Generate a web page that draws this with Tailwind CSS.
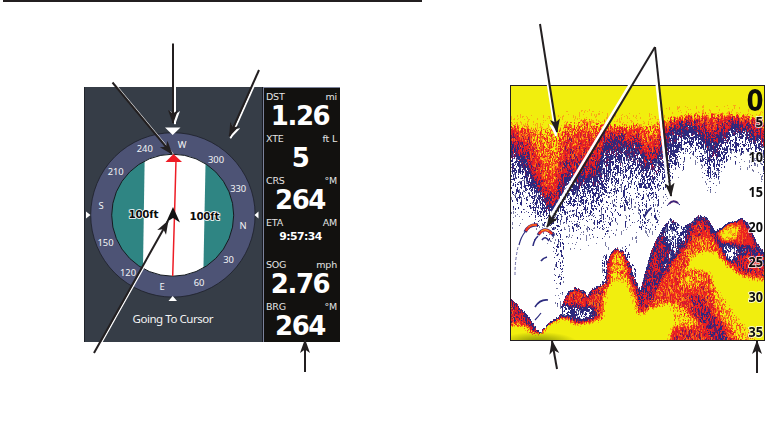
<!DOCTYPE html>
<html lang="en">
<head>
    <meta charset="UTF-8">
    <meta name="viewport" content="width=device-width, initial-scale=1.0">
    <title>Navigation and Sonar Displays</title>
    <script src="https://cdn.jsdelivr.net/npm/@tailwindcss/browser@4"></script>
</head>
<body class="bg-white overflow-hidden font-['DejaVu_Sans',sans-serif]">
    <div class="relative w-[765px] h-[437px] overflow-hidden">
        <div class="ml-[3px] w-[419px] h-[2px] bg-[#231f20]"></div>

        <div class="flex items-start pl-[84px] pt-[83px]">
            <!-- Compass page -->
            <div class="flex mt-[2px] w-[256px] h-[255px] bg-[#12110f]">
                <svg class="w-[178px] h-[255px] bg-[#363d47]" viewBox="84 87 178 255">
                    <defs>
                        <clipPath id="dial"><circle cx="172.7" cy="215.2" r="61"/></clipPath>
                    </defs>
                    <path d="M84.5 87V342" stroke="#20242b"/>
                    <circle cx="172.9" cy="214.9" r="82.2" fill="#4d5375" stroke="#1d2029" stroke-width=".8"/>
                    <g clip-path="url(#dial)">
                        <rect x="110" y="150" width="126" height="130" fill="#2f8583"/>
                        <path d="M144.8 150H205.8L203.2 280H142.8Z" fill="#fff"/>
                    </g>
                    <circle cx="172.7" cy="215.2" r="61" fill="none" stroke="#171a20" stroke-width="1"/>
                    <path d="M176 160L174.5 215L172.7 276" fill="none" stroke="#ee1c25" stroke-width="1.5"/>
                    <path d="M173.5 154L182 162H165.5Z" fill="#ee1c25"/>
                    <path d="M165 127.500H180.500L172.700 135ZM172.700 296L177 301H168.500ZM86 211.500V218.500L90.500 215ZM258.500 211.500V218.500L254.500 215Z" fill="#fff"/>
                    <path d="M173 207L180 222.500L173 218L166 222.500Z" fill="#111"/>
                    <g fill="#f2f3f6" font-size="9.400" text-anchor="middle" font-family="Noto Sans, sans-serif">
                        <text x="144.800" y="152.200">240</text>
                        <text x="182" y="148.200">W</text>
                        <text x="216" y="162.700">300</text>
                        <text x="238.200" y="191.700">330</text>
                        <text x="115.700" y="174.700">210</text>
                        <text x="101" y="209.200">S</text>
                        <text x="243" y="229.200">N</text>
                        <text x="105.500" y="246">150</text>
                        <text x="228.500" y="263.200">30</text>
                        <text x="128" y="275.500">120</text>
                        <text x="162" y="290.200">E</text>
                        <text x="199" y="286.200">60</text>
                    </g>
                    <g font-size="10.500" font-weight="bold" fill="#0b0b0b" stroke="#fff" stroke-width="1.600" paint-order="stroke" font-family="DejaVu Sans, sans-serif">
                        <text x="128.500" y="218.200" textLength="30">100ft</text>
                        <text x="189.500" y="220.200" textLength="30">100ft</text>
                    </g>
                    <text x="132.500" y="323" textLength="81" font-size="11.500" fill="#f4f4f4" font-family="Noto Sans, sans-serif">Going To Cursor</text>
                </svg>
                <!-- Data boxes -->
                <div class="flex flex-col w-[78px] border-l border-[#191b22] shadow-[inset_1px_1px_0_#7b829b] pl-[3px] pr-[3px] pt-[4px] text-white">
                    <div class="h-[42px]">
                        <div class="flex justify-between text-[9.5px] leading-[11px] tracking-[-0.2px] text-[#e4e4e4]"><span>DST</span><span>mi</span></div>
                        <div class="text-[26px] leading-[29px] tracking-[-1.4px] font-bold text-center pr-[3px]">1.26</div>
                    </div>
                    <div class="h-[42px]">
                        <div class="flex justify-between text-[9.5px] leading-[11px] tracking-[-0.2px] text-[#e4e4e4]"><span>XTE</span><span>ft L</span></div>
                        <div class="text-[26px] leading-[29px] tracking-[-1.4px] font-bold text-center pr-[3px]">5</div>
                    </div>
                    <div class="h-[42px]">
                        <div class="flex justify-between text-[9.5px] leading-[11px] tracking-[-0.2px] text-[#e4e4e4]"><span>CRS</span><span>°M</span></div>
                        <div class="text-[26px] leading-[29px] tracking-[-1.4px] font-bold text-center pr-[3px]">264</div>
                    </div>
                    <div class="h-[42px]">
                        <div class="flex justify-between text-[9.5px] leading-[11px] tracking-[-0.2px] text-[#e4e4e4]"><span>ETA</span><span>AM</span></div>
                        <div class="text-[10.8px] leading-[18px] tracking-[-0.5px] font-bold text-center pr-[2px]">9:57:34</div>
                    </div>
                    <div class="h-[42px]">
                        <div class="flex justify-between text-[9.5px] leading-[11px] tracking-[-0.2px] text-[#e4e4e4]"><span>SOG</span><span>mph</span></div>
                        <div class="text-[26px] leading-[29px] tracking-[-1.4px] font-bold text-center pr-[3px]">2.76</div>
                    </div>
                    <div class="h-[40px]">
                        <div class="flex justify-between text-[9.5px] leading-[11px] tracking-[-0.2px] text-[#e4e4e4]"><span>BRG</span><span>°M</span></div>
                        <div class="text-[26px] leading-[29px] tracking-[-1.4px] font-bold text-center pr-[3px]">264</div>
                    </div>
                </div>
            </div>

            <!-- Sonar page -->
            <canvas id="sonar" width="255" height="256" class="ml-[170px] block"></canvas>
        </div>

        <!-- Depth scale and callout arrows -->
        <svg class="absolute left-0 top-0 w-[765px] h-[437px]" viewBox="0 0 765 437">
            <defs>
                <marker id="head" markerUnits="userSpaceOnUse" markerWidth="16" markerHeight="12" refX="13" refY="5" orient="auto">
                    <path d="M0 0L14 5L0 10L3.500 5Z" fill="#231f20"/>
                </marker>
                <marker id="glow" markerUnits="userSpaceOnUse" markerWidth="16" markerHeight="12" refX="13" refY="5" orient="auto">
                    <path d="M0 0L14 5L0 10L3.500 5Z" fill="#fff"/>
                </marker>
            </defs>
            <g font-family="Noto Sans, sans-serif" font-weight="bold" font-size="14" fill="#0c0c0c" stroke="#fff" stroke-opacity=".75" stroke-width="2" paint-order="stroke">
                <text x="746.500" y="111" font-size="31" stroke="none" font-family="DejaVu Sans, sans-serif" textLength="17" lengthAdjust="spacingAndGlyphs">0</text>
                <text x="755.500" y="127" textLength="7.500" lengthAdjust="spacingAndGlyphs">5</text>
                <text x="748.500" y="162" textLength="14.500" lengthAdjust="spacingAndGlyphs">10</text>
                <text x="748.500" y="197" textLength="14.500" lengthAdjust="spacingAndGlyphs">15</text>
                <text x="748.500" y="232" textLength="14.500" lengthAdjust="spacingAndGlyphs">20</text>
                <text x="748.500" y="267" textLength="14.500" lengthAdjust="spacingAndGlyphs">25</text>
                <text x="748.500" y="302" textLength="14.500" lengthAdjust="spacingAndGlyphs">30</text>
                <text x="748.500" y="337" textLength="14.500" lengthAdjust="spacingAndGlyphs">35</text>
            </g>
            <g fill="none" stroke="#fff" stroke-width="2">
                <path d="M175 46V124" marker-end="url(#glow)"/>
                <path d="M114 83L173 154" stroke-width="1.500"/>
                <path d="M260.500 71L230.500 138" marker-end="url(#glow)"/>
                <path d="M95.500 353.500L169.500 221.500" stroke-width="1.500"/>
                <path d="M539 30L556 136" marker-end="url(#glow)"/>
                <path d="M652.500 47L547 222" stroke-width="2.500"/>
                <path d="M653 49L668 190" stroke-width="2.500"/>
            </g>
            <g fill="none" stroke="#231f20" stroke-width="2">
                <path d="M173 43.500V123" marker-end="url(#head)"/>
                <path d="M112.500 82.500L172 154" marker-end="url(#head)"/>
                <path d="M259 70L229.500 136" marker-end="url(#head)"/>
                <path d="M94 353L168 221" marker-end="url(#head)"/>
                <path d="M305 372V340" marker-end="url(#head)"/>
                <path d="M540 24L557 132" marker-end="url(#head)"/>
                <path d="M655 47L547 227" marker-end="url(#head)"/>
                <path d="M655 47L671 196" marker-end="url(#head)"/>
                <path d="M557 369L552 341" marker-end="url(#head)"/>
                <path d="M757 373V341" marker-end="url(#head)"/>
            </g>
        </svg>
    </div>

    <script>
        const W = 255, H = 256;
        const ctx = document.getElementById('sonar').getContext('2d');

        let seed = 4711;
        function rnd() {
            seed = (seed * 1664525 + 1013904223) % 4294967296;
            return seed / 4294967296;
        }

        // linear interpolation through [x, y] points
        function curve(points, x) {
            for (let i = 1; i < points.length; i++) {
                if (x <= points[i][0]) {
                    const [x0, y0] = points[i - 1], [x1, y1] = points[i];
                    return y0 + (y1 - y0) * (x - x0) / (x1 - x0);
                }
            }
            return points[points.length - 1][1];
        }

        // surface clutter: where each echo strength ends
        const yellow = [[0,38],[20,41],[35,43],[50,42],[60,35],[80,34],[100,37],[125,38],[145,36],[155,30],[185,27],[205,25],[225,27],[255,31]];
        const orange = [[0,43],[20,50],[28,65],[33,92],[42,96],[48,75],[54,50],[66,46],[80,48],[100,42],[125,45],[143,52],[155,33],[185,30],[205,28],[225,30],[255,35]];
        const red = [[0,56],[15,70],[25,91],[35,112],[42,121],[50,101],[60,84],[75,90],[88,78],[93,52],[105,50],[120,57],[132,58],[140,70],[148,68],[155,41],[170,36],[185,38],[200,50],[210,40],[225,36],[240,44],[255,50]];
        const navy = [[0,83],[15,98],[25,110],[40,128],[50,122],[60,108],[75,105],[90,106],[100,86],[115,76],[125,82],[140,92],[150,88],[160,74],[170,58],[180,51],[190,53],[198,78],[210,72],[220,50],[235,54],[255,68]];
        const specks = [[0,125],[15,128],[30,140],[42,160],[58,152],[75,144],[95,144],[115,135],[125,136],[140,138],[148,118],[155,100],[165,80],[178,70],[190,72],[198,94],[210,86],[220,70],[235,72],[255,86]];

        // sea bed outline
        const bed = [[0,212],[10,222],[20,233],[27,245],[30,247],[37,238],[48,231],[50,222],[57,207],[65,202],[73,205],[77,210],[82,203],[90,199],[95,196],[97,175],[102,165],[107,162],[113,166],[119,177],[124,192],[130,204],[135,185],[142,162],[152,142],[160,133],[167,138],[173,142],[180,137],[188,130],[197,132],[205,146],[211,142],[218,137],[225,136],[230,132],[238,138],[247,158],[255,168]];

        // echo strength of the bed, drawn in grey levels (0..255)
        const off = document.createElement('canvas');
        off.width = W;
        off.height = H;
        const g = off.getContext('2d', { willReadFrequently: true });
        g.fillStyle = 'rgb(84,84,84)';
        g.fillRect(0, 0, W, H);
        g.filter = 'blur(2px)';
        function area(level, pts) {
            g.fillStyle = `rgb(${level},${level},${level})`;
            g.beginPath();
            pts.forEach(([x, y]) => g.lineTo(x, y));
            g.fill();
        }
        area(143, [[-5,210],[8,224],[20,238],[24,248],[-5,250]]);
        area(155, [[50,222],[58,208],[65,203],[73,206],[78,212],[84,204],[95,198],[100,190],[100,245],[86,240],[84,222],[76,222],[64,220],[58,220]]);
        area(165, [[98,200],[98,178],[103,168],[107,164],[112,168],[117,181],[123,197],[129,212],[130,240],[92,240]]);
        area(36, [[50,222],[58,220],[61,231],[50,232]]);
        area(54, [[67,223],[73,226],[83,221],[83,231],[70,235],[65,230]]);
        area(135, [[128,228],[130,212],[137,190],[144,168],[150,154],[157,150],[157,168],[147,188],[144,226]]);
        area(168, [[133,234],[146,204],[160,180],[172,164],[185,150],[197,146],[210,162],[232,186],[255,175],[255,256],[158,256]]);
        area(118, [[134,212],[139,192],[147,165],[153,165],[147,192],[140,214]]);
        area(145, [[180,143],[190,134],[196,139],[204,151],[195,155],[178,156]]);
        area(182, [[184,158],[196,149],[202,153],[206,164],[188,168]]);
        area(162, [[206,147],[218,139],[231,134],[239,145],[246,162],[228,160],[214,157],[206,151]]);
        area(222, [[209,147],[219,141],[229,141],[227,152],[213,157]]);
        area(140, [[225,178],[234,168],[255,169],[255,192],[240,192]]);
        area(50, [[158,137],[167,140],[177,145],[173,153],[159,161],[154,156]]);
        area(12, [[212,160],[220,166],[225,163],[223,174],[219,177]]);
        area(252, [[-5,240],[15,241],[21,247],[30,249],[37,240],[48,234],[55,232],[67,239],[80,236],[92,235],[95,212],[98,202],[104,196],[108,193],[116,194],[124,214],[128,229],[150,221],[162,218],[170,226],[168,236],[163,242],[160,262],[-5,262]]);
        area(218, [[103,168],[111,168],[114,176],[119,196],[101,197],[101,184]]);
        area(252, [[175,188],[180,174],[187,168],[204,166],[210,173],[222,185],[234,192],[260,196],[260,262],[248,262],[222,230],[207,206],[199,188],[185,184]]);
        area(194, [[176,188],[190,187],[198,200],[180,206],[168,198]]);
        area(208, [[160,220],[179,225],[187,240],[168,244]]);
        area(212, [[203,203],[218,222],[248,260],[226,260],[206,224]]);
        area(158, [[168,205],[184,203],[194,198],[205,222],[232,260],[206,260],[192,240],[172,220]]);
        area(120, [[180,212],[190,211],[200,228],[214,244],[218,260],[204,260],[194,240],[184,227]]);
        area(150, [[163,246],[175,243],[196,246],[205,260],[159,260]]);
        g.filter = 'blur(.8px)';
        g.strokeStyle = 'rgb(165,165,165)';
        g.lineWidth = 1.6;
        for (const y of [168, 176, 184]) {
            g.beginPath();
            g.moveTo(99, y + 7);
            g.lineTo(104, y + 2);
            g.lineTo(109, y + 4);
            g.lineTo(115, y + 3);
            g.lineTo(118, y + 8);
            g.stroke();
        }
        g.beginPath();
        g.moveTo(175, 189);
        g.quadraticCurveTo(185, 184, 190, 189);
        g.stroke();
        const level = g.getImageData(0, 0, W, H).data;

        function color(v) {
            if (v < .2) return [255, 255, 255];
            if (v < .225) return [122, 124, 165];
            if (v < .42) return [43, 42, 126];
            if (v < .48) return [112, 27, 92];
            if (v < .55) return [205, 28, 48];
            if (v < .67) return [237, 35, 33];
            if (v < .76) return [244, 100, 25];
            if (v < .82) return [250, 170, 22];
            return [241, 238, 14];
        }

        const img = ctx.createImageData(W, H);
        let drift = 0;
        for (let x = 0; x < W; x++) {
            drift = drift * .7 + (rnd() - .5) * 5;
            const jitter = drift + (rnd() - .5) * 6;
            const stops = [
                [0, 1],
                [curve(yellow, x) + jitter * .4, .93],
                [curve(yellow, x) + jitter * .4 + 3, .77],
                [curve(orange, x) + jitter, .67],
                [curve(red, x) + jitter, .49],
                [curve(red, x) + jitter + 5, .38],
                [curve(navy, x) + jitter, .23],
                [curve(navy, x) + jitter + 14, .125],
                [curve(specks, x) + jitter, .07],
                [curve(specks, x) + jitter + 22, 0]
            ];
            for (let i = 1; i < stops.length; i++) {
                stops[i][0] = Math.max(stops[i][0], stops[i - 1][0] + 1);
            }
            const top = curve(bed, x) + (rnd() - .5) * 1.6;
            const hump = x > 204 && x < 245;
            let n = 0;
            for (let y = 0; y < H; y++) {
                if (rnd() < .62) n = rnd() - .5;
                let v;
                if (y >= top) {
                    v = level[(y * W + x) * 4] / 255;
                    if (y < top + 1.5) v = Math.min(v, .33);
                    v += n * (v > .95 ? .1 : v < .25 ? .36 : hump && y < 160 ? .2 : .31);
                } else {
                    v = curve(stops, y);
                    // trail of noise under the boat and beside the hill
                    if (x > 43 && x < 54 && y > 120) v = Math.max(v, y < 195 ? .11 : .05);
                    if (x > 128 && x < 150 && y > 85 && y < 145) v = Math.max(v, .085);
                    if (x > 55 && x < 128 && y > 110 && y < 165) v = Math.max(v, .035);
                    if (x > 91 && x < 97 && y > 168) v = Math.max(v, .16);
                    if (x > 114 && x < 127 && y > top - 10) v = Math.max(v, .14);
                    v += n * (v > .95 ? .08 : v < .3 ? .36 : .32);
                }
                const c = color(v);
                const p = (y * W + x) * 4;
                img.data[p] = c[0];
                img.data[p + 1] = c[1];
                img.data[p + 2] = c[2];
                img.data[p + 3] = 255;
            }
        }
        ctx.putImageData(img, 0, 0);

        // fish arches
        function arch(stroke, width, x0, y0, cx, cy, x1, y1) {
            ctx.strokeStyle = stroke;
            ctx.lineWidth = width;
            ctx.beginPath();
            ctx.moveTo(x0, y0);
            ctx.quadraticCurveTo(cx, cy, x1, y1);
            ctx.stroke();
        }
        arch('#2b2a7e', 3.2, 15, 147, 19, 139, 28, 140);
        arch('#ee3224', 2.4, 16, 146, 19, 139, 27, 140);
        arch('#f47a20', 1, 18, 142, 21, 139, 26, 140);
        arch('#2b2a7e', 1.2, 9, 160, 11, 152, 15, 147);
        arch('#2b2a7e', 3, 28, 150, 35, 139, 44, 151);
        arch('#ee3224', 2.6, 29, 149, 35, 141, 42, 149);
        arch('#f9a11b', 1, 31, 146, 35, 143, 39, 146);
        arch('#2b2a7e', 1.5, 23, 161, 24, 155, 28, 151);
        arch('#2b2a7e', 1.5, 32, 155, 35, 150, 39, 156);
        arch('#2b2a7e', 1.8, 31, 176, 33, 173, 37, 172);
        arch('#2b2a7e', 1.6, 25, 222, 30, 214, 38, 215);
        arch('#2b2a7e', 1.2, 25, 235, 28, 232, 31, 228);
        ctx.setLineDash([3, 2]);
        arch('#6a6aa5', 1, 5, 190, 5, 175, 8, 162);
        ctx.setLineDash([]);
        arch('#5d1c6e', 2, 159, 119, 163, 114, 168, 118);
        arch('#2b2a7e', 1, 157, 121, 163, 112, 170, 120);
        arch('#2b2a7e', 2, 134, 132, 137, 126, 141, 123);

        ctx.save();
        ctx.translate(28, 258);
        ctx.scale(1, .28);
        const shade = ctx.createRadialGradient(0, 0, 2, 0, 0, 40);
        shade.addColorStop(0, 'rgba(95,110,0,.8)');
        shade.addColorStop(1, 'rgba(95,110,0,0)');
        ctx.fillStyle = shade;
        ctx.fillRect(-28, -40, 70, 40);
        ctx.restore();
        ctx.strokeStyle = '#231f20';
        ctx.lineWidth = 1;
        ctx.strokeRect(.5, .5, W - 1, H - 1);
    </script>
</body>
</html>
